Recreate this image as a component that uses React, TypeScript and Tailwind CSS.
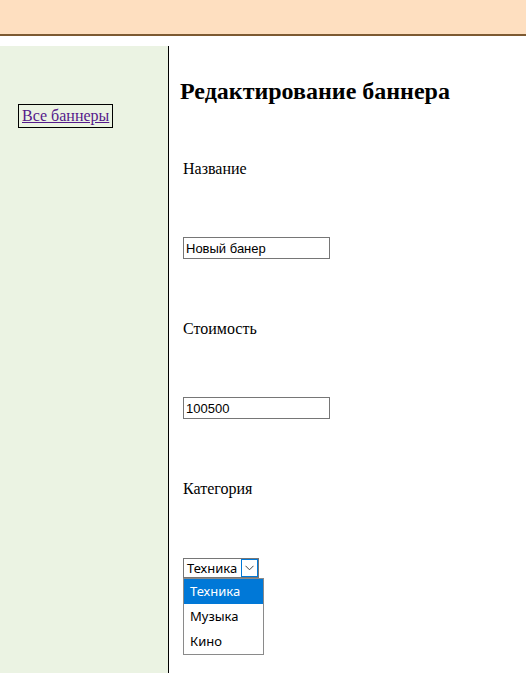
import { useState } from 'react';

const categories = ['Техника', 'Музыка', 'Кино'];

const labelCls = 'ml-[3px] text-[16px] leading-[18px]';
const inputCls =
  "mt-[59px] ml-[3px] h-[22px] w-[147px] border border-[#767676] px-[2px] font-['Liberation_Sans',sans-serif] text-[13px] text-black outline-none";

export default function App() {
  const [selected] = useState(0);

  return (
    <div className="min-h-[673px] bg-white font-['Liberation_Serif',serif] text-black">
      <header className="h-[36px] border-b-2 border-[#7d5a32] bg-[#fedfc0]" />

      <div className="mt-[10px] flex min-h-[627px]">
        <aside className="w-[169px] shrink-0 border-r border-black bg-[#ebf3e3] pt-[58px] pl-[18px]">
          <a
            href="#"
            className="inline-block border border-black px-[3px] text-[16px] leading-[22px] text-[#551a8b] underline">
            Все баннеры
          </a>
        </aside>

        <main className="flex-1 pt-[31px] pl-[11px]">
          <h2 className="text-[24px] leading-[28px] font-bold">Редактирование баннера</h2>

          <form className="flex flex-col items-start pb-[20px]">
            <p className={`mt-[55px] ${labelCls}`}>Название</p>
            <input defaultValue="Новый банер" className={inputCls} />

            <p className={`mt-[61px] ${labelCls}`}>Стоимость</p>
            <input defaultValue="100500" className={inputCls} />

            <p className={`mt-[61px] ${labelCls}`}>Категория</p>
            <div className="relative mt-[60px] ml-[3px]">
              <div className="flex h-[20px] w-[76px] items-center border border-[#767676] bg-white pl-[3px] font-['Noto_Sans',sans-serif] text-[13px]">
                <span className="flex-1 leading-none">{categories[selected]}</span>
                <span className="flex h-[18px] w-[17px] items-center justify-center border border-[#0078d7] bg-white">
                  <svg width="9" height="6" viewBox="0 0 9 6" fill="none">
                    <path d="M0.5 0.8L4.5 4.8L8.5 0.8" stroke="#444" strokeWidth="1" />
                  </svg>
                </span>
              </div>
              <ul className="absolute top-[20px] left-0 z-10 w-[81px] border border-[#8a8a8a] bg-white font-['Noto_Sans',sans-serif] text-[13px]">
                {categories.map((c, i) => (
                  <li
                    key={c}
                    className={
                      i === selected
                        ? 'flex h-[25px] items-center bg-[#0078d7] pl-[6px] text-white'
                        : 'flex h-[25px] items-center pl-[6px] text-black'
                    }>
                    {c}
                  </li>
                ))}
              </ul>
            </div>
          </form>
        </main>
      </div>
    </div>
  );
}
